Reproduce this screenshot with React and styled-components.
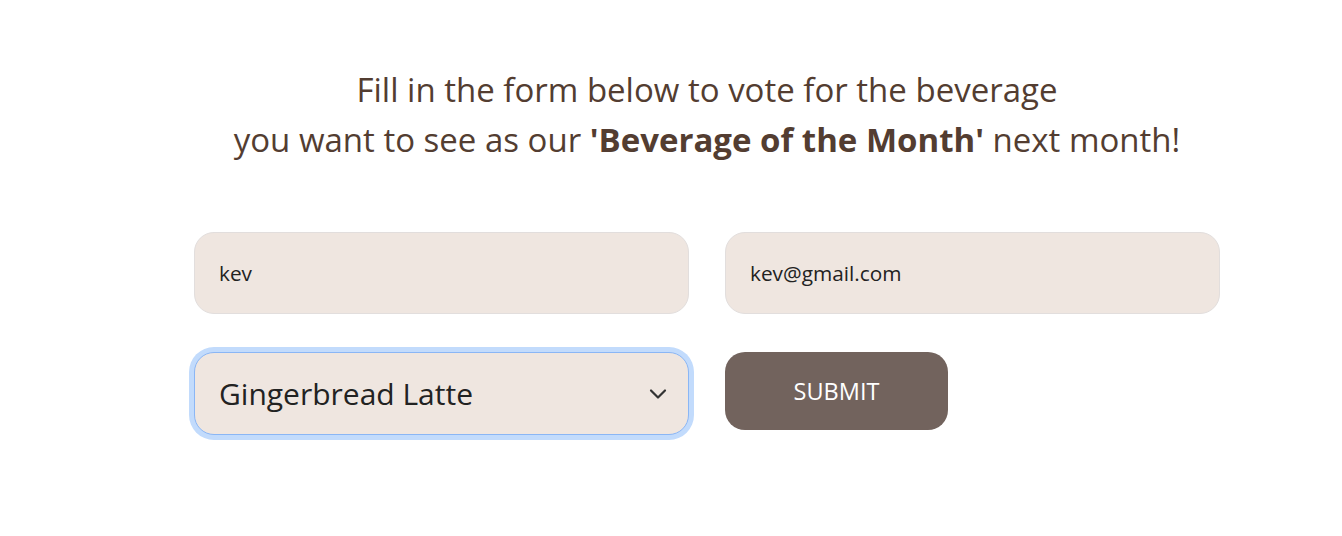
import styled, { createGlobalStyle } from "styled-components";

const GlobalStyle = createGlobalStyle`
  body {
    margin: 0;
    background: #ffffff;
    font-family: "Open Sans", "Noto Sans", sans-serif;
  }
`;

const Page = styled.main`
  display: flex;
  justify-content: center;
  padding: 65px 0 0 72px;
  min-height: 536px;
  box-sizing: border-box;
`;

const Content = styled.section`
  width: 1026px;
  display: flex;
  flex-direction: column;
  align-items: center;
`;

const Intro = styled.h2`
  margin: 0;
  font-size: 33px;
  line-height: 50px;
  font-weight: 400;
  color: #533d31;
  text-align: center;
  white-space: nowrap;
`;

const Form = styled.form`
  margin-top: 67px;
  width: 100%;
  display: grid;
  grid-template-columns: 495px 495px;
  column-gap: 36px;
  row-gap: 38px;
`;

const Field = styled.input`
  box-sizing: border-box;
  height: 82px;
  padding: 0 24px;
  border: 1px solid #e2dedd;
  border-radius: 20px;
  background: #efe6e0;
  font-family: inherit;
  font-size: 20.8px;
  color: #222;
  outline: none;
`;

const SelectWrap = styled.div`
  position: relative;
  height: 83px;
`;

const Select = styled.select`
  box-sizing: border-box;
  width: 100%;
  height: 100%;
  padding: 0 24px;
  appearance: none;
  border: 1px solid #8ab6f5;
  border-radius: 20px;
  background: #efe6e0;
  box-shadow: 0 0 0 5px #c2dbfc;
  font-family: inherit;
  font-size: 30px;
  color: #222;
  outline: none;
`;

const Chevron = styled.svg`
  position: absolute;
  right: 22px;
  top: 50%;
  transform: translateY(-50%);
  pointer-events: none;
`;

const Submit = styled.button`
  width: 223px;
  height: 78px;
  border: none;
  border-radius: 20px;
  background: #72635d;
  color: #ffffff;
  font-family: inherit;
  font-size: 23.5px;
  cursor: pointer;
`;

export default function App() {
  return (
    <>
      <GlobalStyle />
      <Page>
        <Content>
          <Intro>
            Fill in the form below to vote for the beverage
            <br />
            you want to see as our <b>'Beverage of the Month'</b> next month!
          </Intro>
          <Form onSubmit={(e) => e.preventDefault()}>
            <Field type="text" defaultValue="kev" />
            <Field type="email" defaultValue="kev@gmail.com" />
            <SelectWrap>
              <Select defaultValue="gingerbread">
                <option value="gingerbread">Gingerbread Latte</option>
                <option value="pumpkin">Pumpkin Spice Latte</option>
                <option value="peppermint">Peppermint Mocha</option>
              </Select>
              <Chevron width="18" height="11" viewBox="0 0 18 11">
                <path
                  d="M2 2 L9 9 L16 2"
                  fill="none"
                  stroke="#333"
                  strokeWidth="2.2"
                  strokeLinecap="round"
                  strokeLinejoin="round"
                />
              </Chevron>
            </SelectWrap>
            <Submit type="submit">SUBMIT</Submit>
          </Form>
        </Content>
      </Page>
    </>
  );
}
